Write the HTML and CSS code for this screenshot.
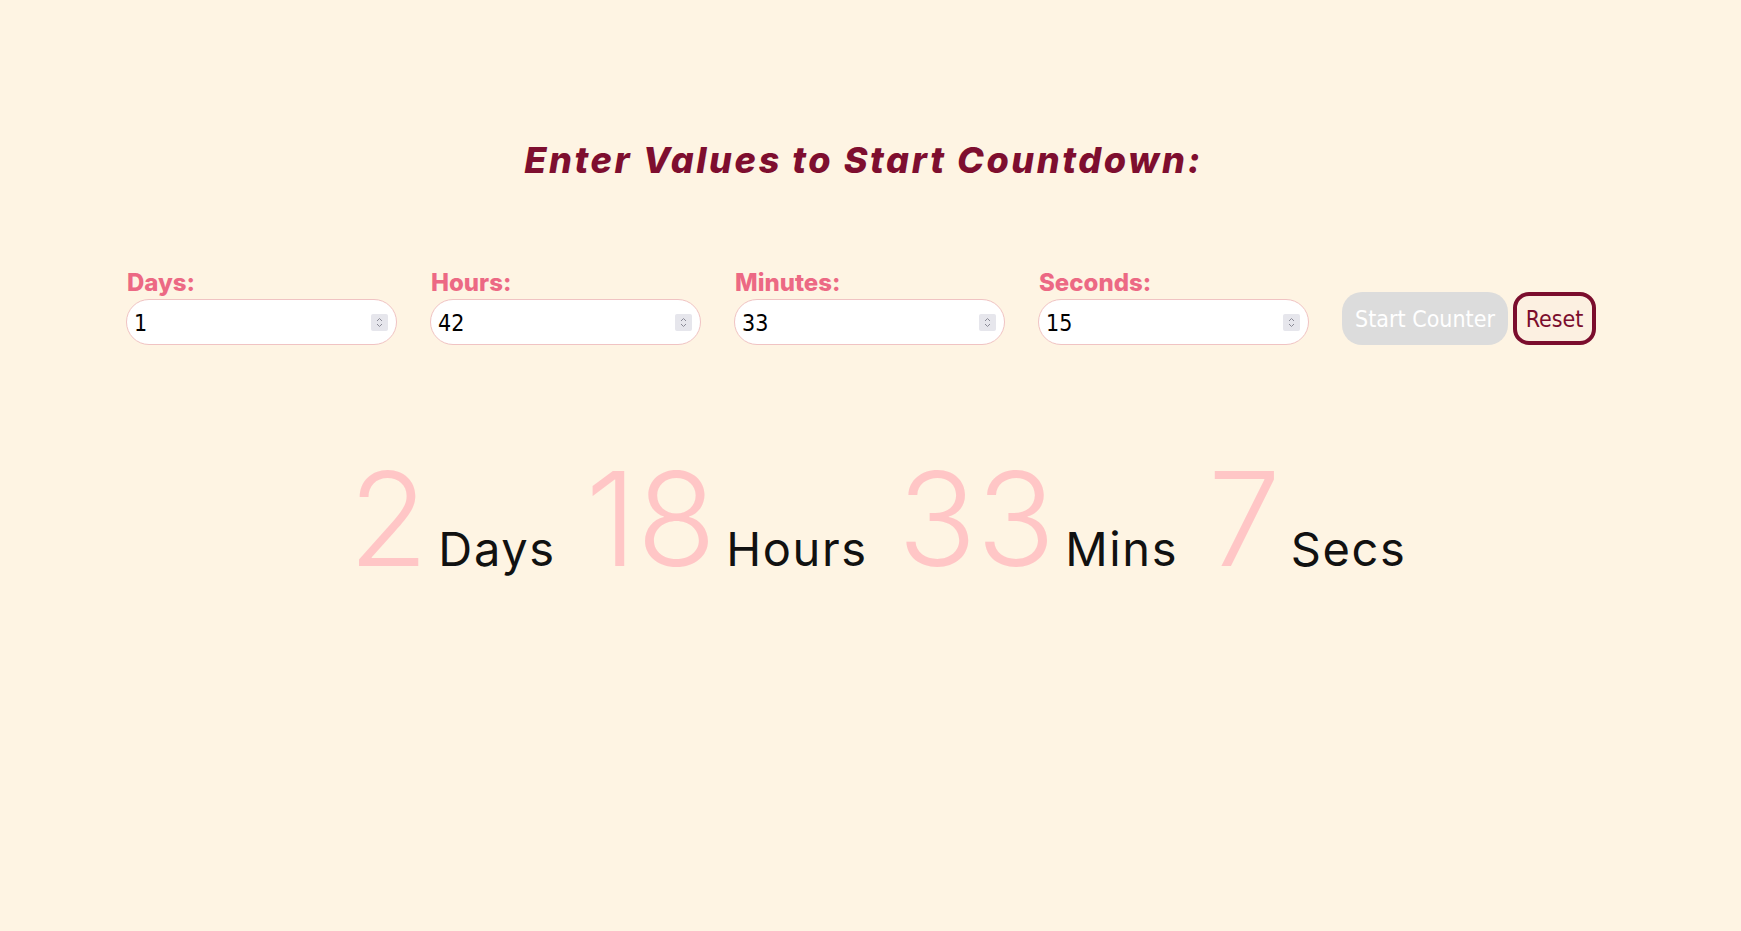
FILE: index.html
```html
<!DOCTYPE html>
<html lang="en">
<head>
<meta charset="utf-8">
<title>Countdown</title>
<link rel="stylesheet" href="styles.css">
</head>
<body>
<main class="page">
  <h1 class="title">Enter Values to Start Countdown:</h1>
  <form class="form">
    <label class="field">
      <span class="field-label">Days:</span>
      <span class="box"><input class="num" type="number" value="1"><span class="spin"><svg viewBox="0 0 17 17" width="17" height="17"><path d="M6 7 L8.5 4.5 L11 7 M6 10 L8.5 12.5 L11 10" fill="none" stroke="#8a8a96" stroke-width="1"/></svg></span></span>
    </label>
    <label class="field">
      <span class="field-label">Hours:</span>
      <span class="box"><input class="num" type="number" value="42"><span class="spin"><svg viewBox="0 0 17 17" width="17" height="17"><path d="M6 7 L8.5 4.5 L11 7 M6 10 L8.5 12.5 L11 10" fill="none" stroke="#8a8a96" stroke-width="1"/></svg></span></span>
    </label>
    <label class="field">
      <span class="field-label">Minutes:</span>
      <span class="box"><input class="num" type="number" value="33"><span class="spin"><svg viewBox="0 0 17 17" width="17" height="17"><path d="M6 7 L8.5 4.5 L11 7 M6 10 L8.5 12.5 L11 10" fill="none" stroke="#8a8a96" stroke-width="1"/></svg></span></span>
    </label>
    <label class="field">
      <span class="field-label">Seconds:</span>
      <span class="box"><input class="num" type="number" value="15"><span class="spin"><svg viewBox="0 0 17 17" width="17" height="17"><path d="M6 7 L8.5 4.5 L11 7 M6 10 L8.5 12.5 L11 10" fill="none" stroke="#8a8a96" stroke-width="1"/></svg></span></span>
    </label>
    <div class="actions">
      <button type="button" class="btn btn-start" disabled>Start Counter</button>
      <button type="button" class="btn btn-reset">Reset</button>
    </div>
  </form>
  <section class="countdown">
    <div class="unit"><span class="value">2</span><span class="name">Days</span></div>
    <div class="unit"><span class="value">18</span><span class="name">Hours</span></div>
    <div class="unit"><span class="value">33</span><span class="name">Mins</span></div>
    <div class="unit"><span class="value">7</span><span class="name">Secs</span></div>
  </section>
</main>
</body>
</html>
```
FILE: styles.css
```css
* { box-sizing: border-box; }
html, body {
  margin: 0;
  padding: 0;
  background: #fef4e3;
  min-height: 100%;
}
body {
  font-family: "Inter", "Open Sans", sans-serif;
  color: #111;
}
.page {
  width: 1741px;
  min-height: 931px;
  padding-top: 136px;
}
.title {
  margin: 0;
  text-align: center;
  font-family: "Inter", sans-serif;
  font-style: italic;
  font-weight: 800;
  font-size: 36px;
  line-height: 48px;
  letter-spacing: 2.6px;
  color: #7e0e2f;
  padding-right: 14px;
}
.form {
  display: flex;
  align-items: flex-end;
  gap: 33px;
  padding-left: 126px;
  margin-top: 86px;
}
.field {
  display: flex;
  flex-direction: column;
  width: 271px;
}
.field-label {
  font-family: "Inter", sans-serif;
  font-weight: 800;
  font-size: 24px;
  line-height: 26px;
  color: #ec6984;
  padding-left: 1px;
  margin-bottom: 3px;
}
.box {
  display: flex;
  align-items: center;
  height: 46px;
  background: #fff;
  border: 1px solid #f0c3c3;
  border-radius: 23px;
  padding: 0 8px 0 7px;
}
.num {
  flex: 1;
  min-width: 0;
  border: none;
  outline: none;
  background: transparent;
  font-family: "DejaVu Sans Condensed", "DejaVu Sans", sans-serif;
  font-size: 23px;
  color: #000;
  padding: 2px 0 0;
  -moz-appearance: textfield;
}
.num::-webkit-inner-spin-button,
.num::-webkit-outer-spin-button {
  -webkit-appearance: none;
  margin: 0;
}
.spin {
  display: flex;
  width: 17px;
  height: 17px;
  background: #e6e6ec;
  border-radius: 2px;
}
.actions {
  display: flex;
  gap: 5px;
  margin-bottom: 0;
}
.btn {
  height: 53px;
  font-family: "DejaVu Sans Condensed", "DejaVu Sans", sans-serif;
  font-size: 23px;
  cursor: pointer;
}
.btn-start {
  width: 166px;
  background: #dcdcdc;
  color: #fff;
  border: none;
  border-radius: 20px;
  padding: 0;
}
.btn-reset {
  width: 83px;
  background: #fcf0e1;
  color: #7b0d2d;
  border: 4px solid #7b0d2d;
  border-radius: 16px;
  padding: 0;
}
.countdown {
  display: flex;
  justify-content: center;
  align-items: baseline;
  gap: 30px;
  margin-top: 99px;
  padding-left: 14px;
}
.unit {
  display: flex;
  align-items: baseline;
  gap: 10px;
}
.value {
  font-family: "Inter", sans-serif;
  font-weight: 300;
  font-size: 130px;
  line-height: 150px;
  color: #ffc6c6;
}
.name {
  font-family: "Inter", sans-serif;
  font-weight: 400;
  font-size: 47px;
  letter-spacing: 1.6px;
  color: #111;
}
```
